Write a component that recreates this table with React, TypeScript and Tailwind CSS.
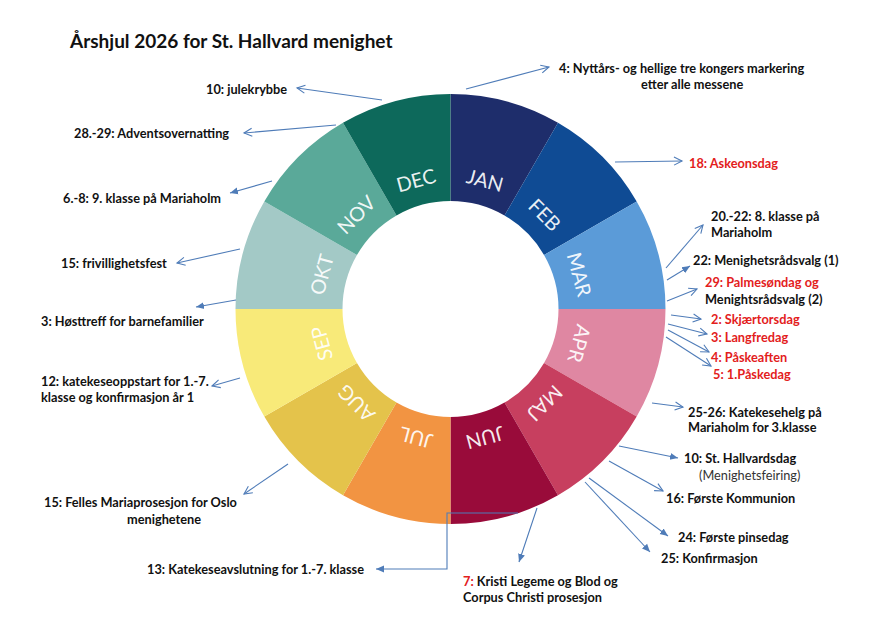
const CX = 450.5;
const CY = 309;
const R_OUT = 215;
const R_IN = 108;

const months = [
  { name: "JAN", color: "#1e2d6b" },
  { name: "FEB", color: "#0f4b94" },
  { name: "MAR", color: "#5b9bd8" },
  { name: "APR", color: "#df87a2" },
  { name: "MAJ", color: "#c73f5f" },
  { name: "JUN", color: "#990b3a" },
  { name: "JUL", color: "#f29442" },
  { name: "AUG", color: "#e4c34b" },
  { name: "SEP", color: "#f8ea79" },
  { name: "OKT", color: "#a3c9c6" },
  { name: "NOV", color: "#5aa999" },
  { name: "DEC", color: "#0d695b" },
];

type Line = { x: number; y: number; text: string; red?: boolean; thin?: boolean; prefix?: string };

const lines: Line[] = [
  { x: 206, y: 89, text: "10: julekrybbe" },
  { x: 74, y: 133, text: "28.-29: Adventsovernatting" },
  { x: 63, y: 198, text: "6.-8: 9. klasse på Mariaholm" },
  { x: 61, y: 263, text: "15: frivillighetsfest" },
  { x: 41, y: 321, text: "3: Høsttreff for barnefamilier" },
  { x: 41, y: 381, text: "12: katekeseoppstart for 1.-7." },
  { x: 41, y: 397, text: "klasse og konfirmasjon år 1" },
  { x: 44, y: 502, text: "15: Felles Mariaprosesjon for Oslo" },
  { x: 127, y: 519, text: "menighetene" },
  { x: 147, y: 569, text: "13: Katekeseavslutning for 1.-7. klasse" },
  { x: 463, y: 581, prefix: "7: ", text: "Kristi Legeme og Blod og" },
  { x: 463, y: 597, text: "Corpus Christi prosesjon" },
  { x: 559, y: 68, text: "4: Nyttårs- og hellige tre kongers markering" },
  { x: 641, y: 84, text: "etter alle messene" },
  { x: 689, y: 163, text: "18: Askeonsdag", red: true },
  { x: 711, y: 216, text: "20.-22: 8. klasse på" },
  { x: 711, y: 232, text: "Mariaholm" },
  { x: 693, y: 260, text: "22: Menighetsrådsvalg (1)" },
  { x: 705, y: 282, text: "29: Palmesøndag og", red: true },
  { x: 705, y: 299, text: "Menightsrådsvalg (2)" },
  { x: 711, y: 319, text: "2: Skjærtorsdag", red: true },
  { x: 711, y: 337, text: "3: Langfredag", red: true },
  { x: 711, y: 357, text: "4: Påskeaften", red: true },
  { x: 713, y: 374, text: "5: 1.Påskedag", red: true },
  { x: 688, y: 412, text: "25-26: Katekesehelg på" },
  { x: 688, y: 427, text: "Mariaholm for 3.klasse" },
  { x: 684, y: 458, text: "10: St. Hallvardsdag" },
  { x: 699, y: 475, text: "(Menighetsfeiring)", thin: true },
  { x: 666, y: 498, text: "16: Første Kommunion" },
  { x: 678, y: 537, text: "24: Første pinsedag" },
  { x: 661, y: 558, text: "25: Konfirmasjon" },
];

// [x1, y1, x2, y2, filled head]
const arrows: [number, number, number, number, boolean][] = [
  [382, 100, 297, 88, false],
  [336, 125, 244, 133, false],
  [272, 181, 230, 193, true],
  [240, 249, 177, 263, false],
  [236, 300, 196, 307, true],
  [240, 378, 212, 386, false],
  [288, 464, 244, 494, false],
  [537, 508, 519, 562, true],
  [466, 89, 549, 67, false],
  [615, 162, 682, 161, false],
  [666, 268, 703, 225, false],
  [667, 280, 690, 266, true],
  [667, 301, 697, 289, false],
  [671, 315, 701, 319, false],
  [668, 324, 707, 334, false],
  [668, 330, 709, 352, false],
  [666, 337, 711, 366, false],
  [652, 403, 683, 407, false],
  [619, 446, 678, 458, true],
  [609, 461, 663, 491, false],
  [589, 478, 668, 536, true],
  [585, 482, 650, 552, true],
];

const pt = (deg: number, r: number) => {
  const a = (deg * Math.PI) / 180;
  return [CX + r * Math.sin(a), CY - r * Math.cos(a)];
};

const sector = (i: number) => {
  const a0 = i * 30;
  const a1 = a0 + 30;
  const [x0, y0] = pt(a0, R_OUT);
  const [x1, y1] = pt(a1, R_OUT);
  const [x2, y2] = pt(a1, R_IN);
  const [x3, y3] = pt(a0, R_IN);
  return `M${x0},${y0} A${R_OUT},${R_OUT} 0 0 1 ${x1},${y1} L${x2},${y2} A${R_IN},${R_IN} 0 0 0 ${x3},${y3} Z`;
};

const Wheel = () => (
  <svg className="absolute inset-0" width="877" height="620" viewBox="0 0 877 620">
    <defs>
      <marker id="open" markerUnits="userSpaceOnUse" markerWidth="12" markerHeight="12" refX="9" refY="5" orient="auto">
        <path d="M1,1 L9,5 L1,9" fill="none" stroke="#4f7cb8" strokeWidth="1.1" />
      </marker>
      <marker id="fill" markerUnits="userSpaceOnUse" markerWidth="12" markerHeight="12" refX="8" refY="4" orient="auto">
        <path d="M0,0.5 L8,4 L0,7.5 Z" fill="#4f7cb8" />
      </marker>
    </defs>
    {months.map((m, i) => (
      <path key={m.name} d={sector(i)} fill={m.color} />
    ))}
    {months.map((m, i) => {
      const mid = i * 30 + 15;
      const [x, y] = pt(mid, 134);
      return (
        <text
          key={m.name + "t"}
          x={x}
          y={y}
          fill="#ffffff"
          fillOpacity="0.92"
          fontSize="20"
          fontFamily="Lato, 'Liberation Sans', sans-serif"
          textAnchor="middle"
          dominantBaseline="central"
          transform={`rotate(${mid} ${x} ${y})`}
        >
          {m.name}
        </text>
      );
    })}
    {arrows.map(([x1, y1, x2, y2, f], i) => (
      <line
        key={i}
        x1={x1}
        y1={y1}
        x2={x2}
        y2={y2}
        stroke="#4f7cb8"
        strokeWidth="1.1"
        markerEnd={f ? "url(#fill)" : "url(#open)"}
      />
    ))}
    <polyline
      points="518,513 447,513 447,569 376,569"
      fill="none"
      stroke="#4f7cb8"
      strokeWidth="1.1"
      markerEnd="url(#fill)"
    />
  </svg>
);

const App = () => {
  return (
    <div className="relative w-[877px] h-[620px] bg-white overflow-hidden font-['Lato','Liberation_Sans',sans-serif] text-[#111111]">
      <Wheel />
      <h1 className="absolute left-[70px] top-[28px] text-[19px] leading-[26px] font-bold">
        Årshjul 2026 for St. Hallvard menighet
      </h1>
      {lines.map((l) => (
        <span
          key={l.text}
          className={`absolute whitespace-nowrap text-[12.75px] leading-4 ${l.thin ? "font-normal text-[#333333]" : "font-bold"} ${
            l.red ? "text-[#e3201c]" : ""
          }`}
          style={{ left: l.x, top: l.y - 8 }}
        >
          {l.prefix && <span className="text-[#e3201c]">{l.prefix}</span>}
          {l.text}
        </span>
      ))}
    </div>
  );
};

export default App;
